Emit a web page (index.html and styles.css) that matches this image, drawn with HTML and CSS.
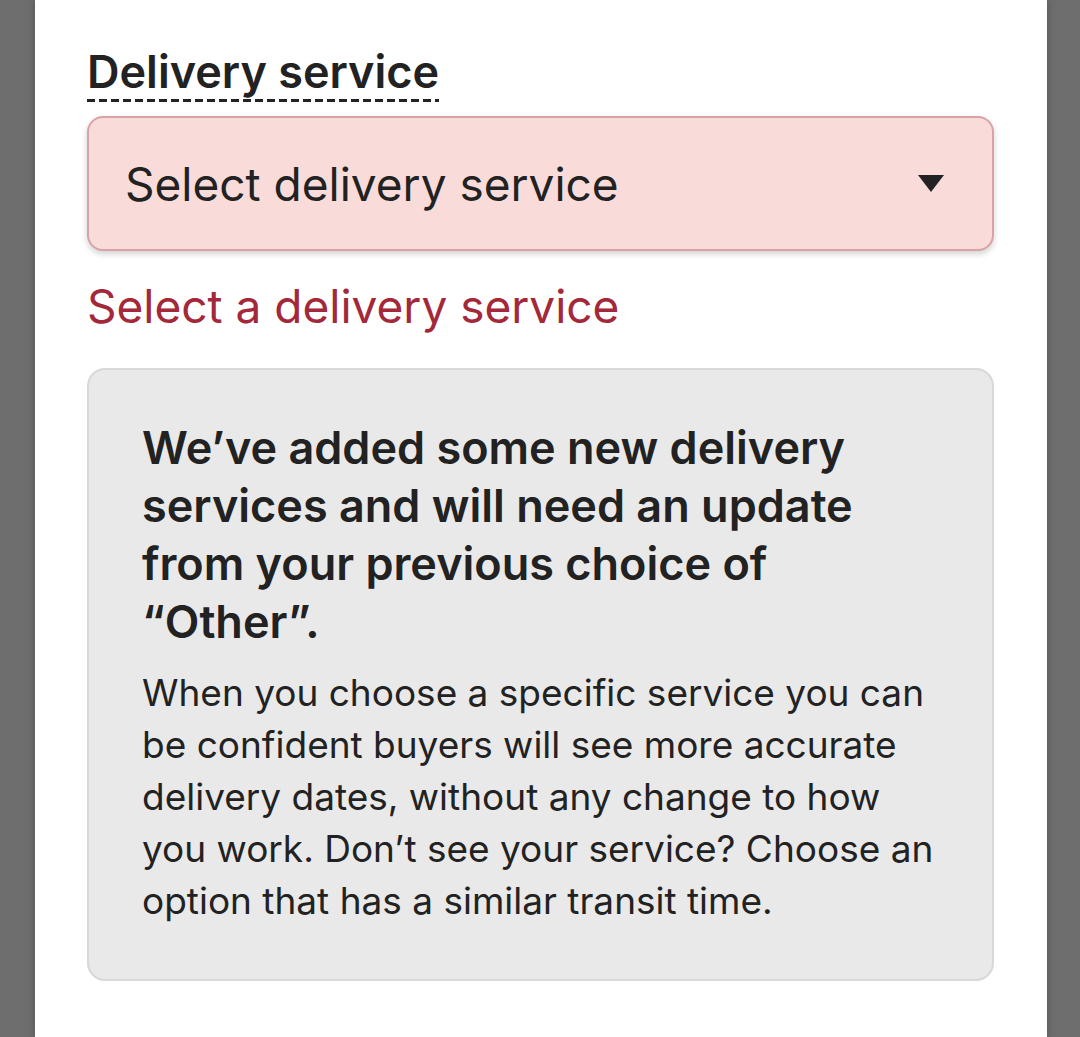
FILE: index.html
```html
<!DOCTYPE html>
<html>
<head>
<meta charset="utf-8">
<link rel="stylesheet" href="styles.css">
</head>
<body>
<div class="panel">
  <div class="field">
    <label class="label"><span class="label-text">Delivery service</span></label>
    <div class="select">
      <span class="select-value">Select delivery service</span>
      <svg class="caret" width="26" height="17" viewBox="0 0 26 17"><polygon points="0,0 26,0 13,17" fill="#222"/></svg>
    </div>
    <div class="error">Select a delivery service</div>
    <div class="notice">
      <h2 class="notice-title">We’ve added some new delivery services and will need an update from your previous choice of “Other”.</h2>
      <p class="notice-body">When you choose a specific service you can be confident buyers will see more accurate delivery dates, without any change to how you work. Don’t see your service? Choose an option that has a similar transit time.</p>
    </div>
  </div>
</div>
</body>
</html>
```
FILE: styles.css
```css
html, body {
  margin: 0;
  padding: 0;
  height: 100%;
}
body {
  background: #6e6e6e;
  font-family: "Inter", "Noto Sans", sans-serif;
  color: #222;
  overflow: hidden;
}
.panel {
  background: #fff;
  margin: 0 33px 0 35px;
  height: 100%;
  box-sizing: border-box;
  padding: 47px 52px 0 52px;
  box-shadow: 0 0 8px rgba(0,0,0,0.25);
}
.field {
  width: 907px;
}
.label {
  display: inline-block;
  font-size: 45px;
  font-weight: 600;
  line-height: 50px;
  padding-bottom: 5px;
  background-image: linear-gradient(to right, #222 0, #222 8px, transparent 8px);
  background-size: 12px 3px;
  background-repeat: repeat-x;
  background-position: 0 100%;
}
.select {
  margin-top: 14px;
  height: 135px;
  box-sizing: border-box;
  border: 2px solid #d9a3a3;
  border-radius: 16px;
  background: #f9dcd9;
  box-shadow: 0 3px 6px rgba(0,0,0,0.18);
  display: flex;
  align-items: center;
  padding: 0 48px 0 36px;
}
.select-value {
  flex: 1;
  font-size: 46px;
  font-weight: 400;
  color: #222;
}
.caret {
  display: block;
}
.error {
  margin-top: 29px;
  font-size: 46px;
  line-height: 52px;
  color: #a3283a;
}
.notice {
  margin-top: 36px;
  background: #e9e9e9;
  border: 2px solid #d8d8d8;
  border-radius: 18px;
  padding: 49px 40px 0 53px;
  height: 613px;
  box-sizing: border-box;
}
.notice-title {
  margin: 0;
  max-width: 745px;
  font-size: 45px;
  font-weight: 600;
  line-height: 58px;
  color: #222;
}
.notice-body {
  margin: 16px 0 0 0;
  font-size: 37px;
  line-height: 52px;
  color: #222;
}
```
